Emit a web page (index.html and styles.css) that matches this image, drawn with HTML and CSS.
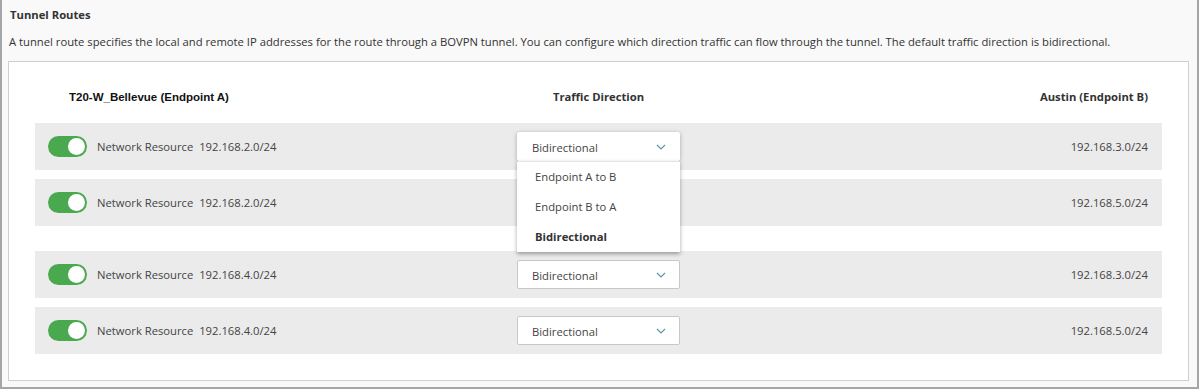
FILE: index.html
```html
<!DOCTYPE html>
<html lang="en">
<head>
    <meta charset="UTF-8">
    <meta name="viewport" content="width=device-width, initial-scale=1.0">
    <title>Tunnel Routes</title>
    <link rel="stylesheet" href="styles.css">
</head>
<body>

<div class="frame">
    <h1 class="title">Tunnel Routes</h1>
    <p class="intro">A tunnel route specifies the local and remote IP addresses for the route through a BOVPN tunnel. You can configure which direction traffic can flow through the tunnel. The default traffic direction is bidirectional.</p>

    <div class="routes">
        <div class="route-head">
            <div class="head-a">T20-W_Bellevue (Endpoint A)</div>
            <div class="head-dir">Traffic Direction</div>
            <div class="head-b">Austin (Endpoint B)</div>
        </div>

        <div class="group">
            <div class="route">
                <div class="local">
                    <span class="toggle on"><span class="knob"></span></span>
                    <span class="label">Network Resource&nbsp; 192.168.2.0/24</span>
                </div>
                <div class="select open">
                    <span>Bidirectional</span>
                    <svg class="chevron" width="10" height="6" viewBox="0 0 10 6"><path d="M1 1 L5 5 L9 1" fill="none" stroke="#5b9aa9" stroke-width="1.2"/></svg>
                    <ul class="menu">
                        <li>Endpoint A to B</li>
                        <li>Endpoint B to A</li>
                        <li class="selected">Bidirectional</li>
                    </ul>
                </div>
                <div class="remote">192.168.3.0/24</div>
            </div>
            <div class="route">
                <div class="local">
                    <span class="toggle on"><span class="knob"></span></span>
                    <span class="label">Network Resource&nbsp; 192.168.2.0/24</span>
                </div>
                <!-- sits under the open menu above -->
                <div class="select covered">
                    <span>Bidirectional</span>
                    <svg class="chevron" width="10" height="6" viewBox="0 0 10 6"><path d="M1 1 L5 5 L9 1" fill="none" stroke="#5b9aa9" stroke-width="1.2"/></svg>
                </div>
                <div class="remote">192.168.5.0/24</div>
            </div>
        </div>

        <div class="group">
            <div class="route">
                <div class="local">
                    <span class="toggle on"><span class="knob"></span></span>
                    <span class="label">Network Resource&nbsp; 192.168.4.0/24</span>
                </div>
                <div class="select">
                    <span>Bidirectional</span>
                    <svg class="chevron" width="10" height="6" viewBox="0 0 10 6"><path d="M1 1 L5 5 L9 1" fill="none" stroke="#5b9aa9" stroke-width="1.2"/></svg>
                </div>
                <div class="remote">192.168.3.0/24</div>
            </div>
            <div class="route">
                <div class="local">
                    <span class="toggle on"><span class="knob"></span></span>
                    <span class="label">Network Resource&nbsp; 192.168.4.0/24</span>
                </div>
                <div class="select">
                    <span>Bidirectional</span>
                    <svg class="chevron" width="10" height="6" viewBox="0 0 10 6"><path d="M1 1 L5 5 L9 1" fill="none" stroke="#5b9aa9" stroke-width="1.2"/></svg>
                </div>
                <div class="remote">192.168.5.0/24</div>
            </div>
        </div>
    </div>
</div>

</body>
</html>
```

FILE: styles.css
```css
body {
    margin: 0;
    font-family: 'Open Sans', 'Liberation Sans', sans-serif;
    font-size: 11.25px;
    color: #333;
    background-color: #fff;
}

.frame {
    width: 1199px;
    height: 389px;
    box-sizing: border-box;
    padding: 7px 8px 0 6px;
    background-color: #f9f9f9;
    border-left: 2px solid #a6a6a6;
    border-right: 2px solid #a6a6a6;
    border-bottom: 2px solid #a6a6a6;
}

.title {
    margin: 0;
    font-size: 11.25px;
    line-height: 16px;
    font-weight: 700;
    color: #333;
    padding-left: 2px;
}

.intro {
    margin: 11px 0 0 0;
    line-height: 16px;
    color: #333;
    padding-left: 1px;
}

.routes {
    margin-top: 11px;
    background-color: #fff;
    border: 1px solid #cfcfcf;
    padding: 27px 26px 26px 26px;
}

.route-head {
    display: grid;
    grid-template-columns: 1fr 163px 1fr;
    line-height: 16px;
    margin-bottom: 18px;
}

.head-a {
    font-family: 'Liberation Sans', Arial, sans-serif;
    font-size: 11.5px;
    font-weight: 700;
    color: #111;
    padding-left: 34px;
}

.head-dir {
    text-align: center;
    font-weight: 700;
    font-size: 11.25px;
    white-space: nowrap;
}

.head-b {
    text-align: right;
    font-weight: 700;
    font-size: 11.25px;
    padding-right: 14px;
}

.group {
    display: flex;
    flex-direction: column;
    gap: 9px;
    margin-bottom: 25px;
}

.group:last-child {
    margin-bottom: 0;
}

.route {
    display: grid;
    grid-template-columns: 1fr 163px 1fr;
    align-items: center;
    height: 47px;
    background-color: #ebebeb;
    color: #444;
}

.local {
    display: flex;
    align-items: center;
    padding-left: 13px;
}

.toggle {
    width: 39px;
    height: 21px;
    border-radius: 11px;
    background-color: #4aa94f;
    display: flex;
    align-items: center;
    justify-content: flex-end;
    padding: 0 2px;
    box-sizing: border-box;
    margin-right: 10px;
}

.knob {
    width: 17px;
    height: 17px;
    border-radius: 50%;
    background-color: #fff;
}

.select {
    position: relative;
    height: 29px;
    box-sizing: border-box;
    display: flex;
    align-items: center;
    justify-content: space-between;
    padding: 1px 13px 0 14px;
    background-color: #fff;
    border: 1px solid #c8c8c8;
    border-radius: 2px;
}

.select.open {
    border-color: #fff;
    box-shadow: 0 1px 4px rgba(0, 0, 0, 0.3);
    z-index: 2;
}

.select.covered {
    visibility: hidden;
}

.menu {
    position: absolute;
    top: 28px;
    left: -1px;
    right: -1px;
    margin: 0;
    padding: 0;
    list-style: none;
    background-color: #fff;
    border-top: 1px solid #e4e4e4;
    box-shadow: 0 2px 4px rgba(0, 0, 0, 0.35);
}

.menu li {
    height: 30px;
    line-height: 30px;
    padding-left: 18px;
    color: #444;
}

.menu li.selected {
    font-weight: 700;
    color: #333;
}

.remote {
    text-align: right;
    padding-right: 14px;
}
```
